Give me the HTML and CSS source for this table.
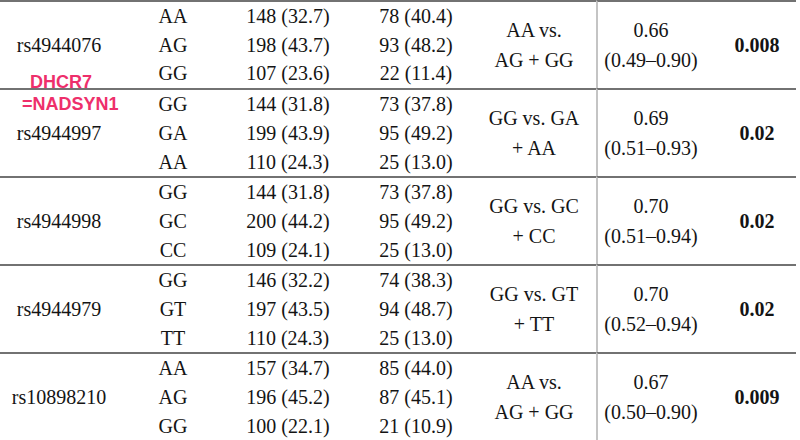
FILE: index.html
```html
<!DOCTYPE html>
<html lang="en">
<head>
  <meta charset="UTF-8" />
  <meta name="viewport" content="width=device-width, initial-scale=1.0" />
  <title>Genotype association table</title>
  <link rel="stylesheet" href="styles.css">
</head>
<body>

<div class="sheet">

<!-- 手書きの注釈 -->
<div class="note">
  <div class="note-gene">DHCR7</div>
  <div class="note-alias">=NADSYN1</div>
</div>

<table class="snp-table">
  <colgroup>
    <col class="c-snp">
    <col class="c-geno">
    <col class="c-case">
    <col class="c-ctrl">
    <col class="c-comp">
    <col class="c-or">
    <col class="c-p">
  </colgroup>

  <tbody>
    <tr class="first">
      <td class="snp" rowspan="3">rs4944076</td>
      <td>AA</td><td>148 (32.7)</td><td class="ctrl">78 (40.4)</td>
      <td class="comp" rowspan="3"><div>AA vs.<br>AG + GG</div></td>
      <td class="or" rowspan="3"><div>0.66<br>(0.49–0.90)</div></td>
      <td class="p" rowspan="3">0.008</td>
    </tr>
    <tr><td>AG</td><td>198 (43.7)</td><td class="ctrl">93 (48.2)</td></tr>
    <tr><td>GG</td><td>107 (23.6)</td><td class="ctrl">22 (11.4)</td></tr>
  </tbody>

  <tbody>
    <tr class="first">
      <td class="snp" rowspan="3">rs4944997</td>
      <td>GG</td><td>144 (31.8)</td><td class="ctrl">73 (37.8)</td>
      <td class="comp" rowspan="3"><div>GG vs. GA<br>+ AA</div></td>
      <td class="or" rowspan="3"><div>0.69<br>(0.51–0.93)</div></td>
      <td class="p" rowspan="3">0.02</td>
    </tr>
    <tr><td>GA</td><td>199 (43.9)</td><td class="ctrl">95 (49.2)</td></tr>
    <tr><td>AA</td><td>110 (24.3)</td><td class="ctrl">25 (13.0)</td></tr>
  </tbody>

  <tbody>
    <tr class="first">
      <td class="snp" rowspan="3">rs4944998</td>
      <td>GG</td><td>144 (31.8)</td><td class="ctrl">73 (37.8)</td>
      <td class="comp" rowspan="3"><div>GG vs. GC<br>+ CC</div></td>
      <td class="or" rowspan="3"><div>0.70<br>(0.51–0.94)</div></td>
      <td class="p" rowspan="3">0.02</td>
    </tr>
    <tr><td>GC</td><td>200 (44.2)</td><td class="ctrl">95 (49.2)</td></tr>
    <tr><td>CC</td><td>109 (24.1)</td><td class="ctrl">25 (13.0)</td></tr>
  </tbody>

  <tbody>
    <tr class="first">
      <td class="snp" rowspan="3">rs4944979</td>
      <td>GG</td><td>146 (32.2)</td><td class="ctrl">74 (38.3)</td>
      <td class="comp" rowspan="3"><div>GG vs. GT<br>+ TT</div></td>
      <td class="or" rowspan="3"><div>0.70<br>(0.52–0.94)</div></td>
      <td class="p" rowspan="3">0.02</td>
    </tr>
    <tr><td>GT</td><td>197 (43.5)</td><td class="ctrl">94 (48.7)</td></tr>
    <tr><td>TT</td><td>110 (24.3)</td><td class="ctrl">25 (13.0)</td></tr>
  </tbody>

  <tbody>
    <tr class="first">
      <td class="snp" rowspan="3">rs10898210</td>
      <td>AA</td><td>157 (34.7)</td><td class="ctrl">85 (44.0)</td>
      <td class="comp" rowspan="3"><div>AA vs.<br>AG + GG</div></td>
      <td class="or" rowspan="3"><div>0.67<br>(0.50–0.90)</div></td>
      <td class="p" rowspan="3">0.009</td>
    </tr>
    <tr><td>AG</td><td>196 (45.2)</td><td class="ctrl">87 (45.1)</td></tr>
    <tr><td>GG</td><td>100 (22.1)</td><td class="ctrl">21 (10.9)</td></tr>
  </tbody>
</table>

</div>

</body>
</html>
```

FILE: styles.css
```css
body {
  margin: 0;
  background: #fff;
  color: #141414;
  font-family: "Liberation Serif", "Times New Roman", serif;
}

.sheet {
  position: relative;
  width: 800px;
  height: 440px;
  overflow: hidden;
}

.snp-table {
  width: 796px;
  table-layout: fixed;
  border-collapse: separate;
  border-spacing: 0;
  font-size: 20px;
}

.c-snp { width: 118px; }
.c-geno { width: 110px; }
.c-case { width: 120px; }
.c-ctrl { width: 124px; }
.c-comp { width: 124px; }
.c-or { width: 114px; }
.c-p { width: 86px; }

.snp-table td {
  padding: 0;
  height: 28.7px;
  line-height: 28.7px;
  text-align: center;
  vertical-align: middle;
  white-space: nowrap;
}

.snp-table tr.first td {
  border-top: 2px solid #727272;
}

.snp-table td.ctrl {
  padding-left: 12px;
}

.snp-table td.comp div,
.snp-table td.or div {
  line-height: 30px;
}

.snp-table td.or {
  border-left: 2px solid #c4c4c4;
  padding-right: 6px;
}

.snp-table td.p {
  font-weight: bold;
  padding-left: 8px;
}

/* ピンクの注釈 */
.note {
  position: absolute;
  top: 71px;
  left: 22px;
  font-family: "Liberation Sans", Arial, sans-serif;
  font-weight: bold;
  font-size: 18px;
  line-height: 22px;
  color: #ee2f6b;
}

.note-gene {
  margin-left: 8px;
}
```
